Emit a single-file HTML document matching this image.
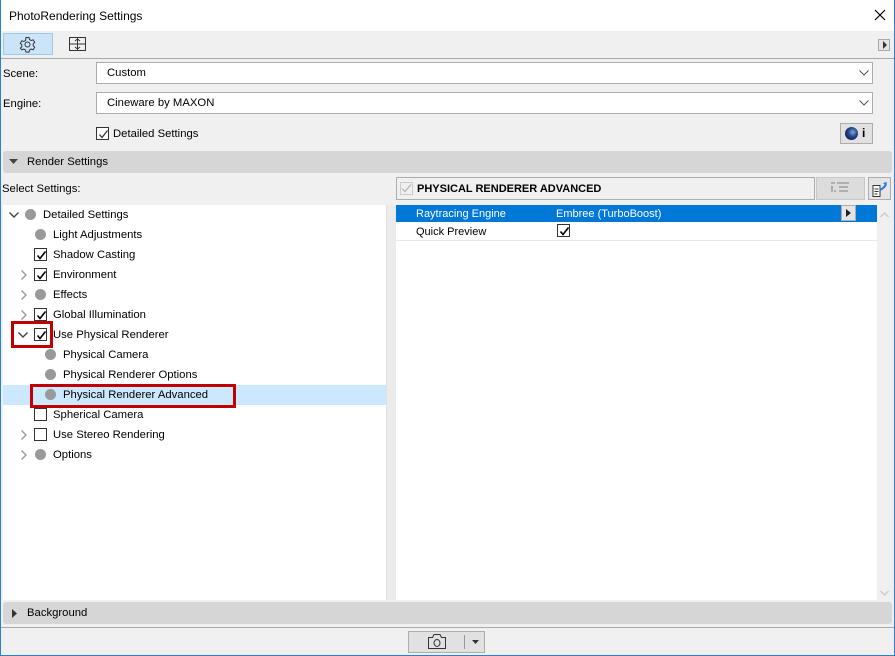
<!DOCTYPE html>
<html><head><meta charset="utf-8"><style>
*{margin:0;padding:0;box-sizing:border-box}
body{width:895px;height:656px;overflow:hidden;background:#f0f0f0;font-family:"Liberation Sans",sans-serif;font-size:11.3px;color:#000;position:relative}
.a{position:absolute}
.t{position:absolute;white-space:nowrap;line-height:14px}
.cb{position:absolute;width:13px;height:13px;border:1px solid #333;background:#fff}
.cb svg{position:absolute;left:1px;top:1px}
.dot{position:absolute;width:11px;height:11px;border-radius:50%;background:#999}
.chev{position:absolute;width:12px;height:12px}
</style></head><body>
<div class="a" style="left:0;top:0;width:895px;height:656px;border:1px solid #2b7fd4;border-top:none"></div>
<div class="a" style="left:1px;top:0;width:893px;height:31px;background:#fff"></div>
<div class="t" style="left:9px;top:9px;font-size:12px">PhotoRendering Settings</div>
<svg class="a" style="left:874px;top:9px" width="12" height="12"><path d="M1 1L11 11M11 1L1 11" stroke="#000" stroke-width="1.2"/></svg>
<div class="a" style="left:3px;top:33px;width:50px;height:22px;background:#cce4f7;border:1px solid #99c9ef"></div>
<svg class="a" style="left:19px;top:36px" width="17" height="17" viewBox="0 0 17 17"><circle cx="8.5" cy="8.5" r="2.5" fill="none" stroke="#333"/><path d="M7 1.5h3l.5 2 1.7 1 2-.7 1.5 2.6-1.5 1.4v2l1.5 1.4-1.5 2.6-2-.7-1.7 1-.5 2h-3l-.5-2-1.7-1-2 .7L1.3 12.2l1.5-1.4v-2L1.3 7.4l1.5-2.6 2 .7 1.7-1z" fill="none" stroke="#333"/></svg>
<svg class="a" style="left:69px;top:37px" width="18" height="15"><rect x="0.5" y="0.5" width="16" height="13" fill="none" stroke="#333"/><path d="M8.5 1v12M1 7h15" stroke="#333"/><path d="M6 4l2.5-2 2.5 2M6 10l2.5 2 2.5-2" fill="none" stroke="#333"/></svg>
<div class="a" style="left:878px;top:39px;width:12px;height:12px;border:1px solid #aaa;background:#e5e5e5"></div>
<svg class="a" style="left:882px;top:41px" width="6" height="8"><path d="M1 0L5 4L1 8z" fill="#333"/></svg>
<div class="a" style="left:1px;top:58px;width:893px;height:1px;background:#aaa"></div>
<div class="t" style="left:3px;top:67px">Scene:</div>
<div class="a" style="left:96px;top:62px;width:777px;height:22px;background:#fff;border:1px solid #adadad"></div>
<div class="t" style="left:107px;top:66px">Custom</div>
<svg class="a" style="left:859px;top:70px" width="10" height="6"><path d="M0.5 0.5L5 5L9.5 0.5" fill="none" stroke="#555"/></svg>
<div class="t" style="left:3px;top:97px">Engine:</div>
<div class="a" style="left:96px;top:92px;width:777px;height:22px;background:#fff;border:1px solid #adadad"></div>
<div class="t" style="left:107px;top:96px">Cineware by MAXON</div>
<svg class="a" style="left:859px;top:100px" width="10" height="6"><path d="M0.5 0.5L5 5L9.5 0.5" fill="none" stroke="#555"/></svg>
<div class="cb" style="left:96px;top:127px"><svg width="11" height="11"><path d="M1.5 5.5L4 8.5L9.5 1.5" fill="none" stroke="#333" stroke-width="1.3"/></svg></div>
<div class="t" style="left:113px;top:127px">Detailed Settings</div>
<div class="a" style="left:840px;top:123px;width:33px;height:21px;border:1px solid #adadad;background:#e1e1e1"></div>
<div class="a" style="left:845px;top:127px;width:13px;height:13px;border-radius:50%;background:radial-gradient(circle at 60% 40%,#8ab 0,#23479a 40%,#0b1030 90%)"></div>
<div class="t" style="left:862px;top:126px;font-weight:bold;font-size:12px">i</div>
<div class="a" style="left:3px;top:151px;width:889px;height:22px;background:#d6d6d6;border-radius:3px"></div>
<svg class="a" style="left:9px;top:159px" width="9" height="5"><path d="M0 0H9L4.5 5z" fill="#444"/></svg>
<div class="t" style="left:27px;top:155px">Render Settings</div>
<div class="t" style="left:2px;top:182px">Select Settings:</div>
<div class="a" style="left:3px;top:205px;width:383px;height:395px;background:#fff"></div>
<div class="a" style="left:386px;top:205px;width:10px;height:395px;background:#ebebeb;border-left:1px solid #e0e0e0"></div>
<div class="a" style="left:3px;top:385px;width:383px;height:20px;background:#cce8ff"></div>
<svg class="chev" style="left:8px;top:209px"><path d="M1.5 3.5L6 8L10.5 3.5" fill="none" stroke="#444" stroke-width="1.4"/></svg>
<div class="dot" style="left:25px;top:209px"></div><div class="t" style="left:43px;top:208px">Detailed Settings</div>
<div class="dot" style="left:35px;top:229px"></div><div class="t" style="left:53px;top:228px">Light Adjustments</div>
<div class="cb" style="left:34px;top:248px"><svg width="11" height="11"><path d="M1.5 5.5L4 8.5L9.5 1.5" fill="none" stroke="#000" stroke-width="1.6"/></svg></div><div class="t" style="left:53px;top:248px">Shadow Casting</div>
<svg class="chev" style="left:18px;top:269px"><path d="M3.5 1.5L8 6L3.5 10.5" fill="none" stroke="#999" stroke-width="1.4"/></svg>
<div class="cb" style="left:34px;top:268px"><svg width="11" height="11"><path d="M1.5 5.5L4 8.5L9.5 1.5" fill="none" stroke="#000" stroke-width="1.6"/></svg></div><div class="t" style="left:53px;top:268px">Environment</div>
<svg class="chev" style="left:18px;top:289px"><path d="M3.5 1.5L8 6L3.5 10.5" fill="none" stroke="#999" stroke-width="1.4"/></svg>
<div class="dot" style="left:35px;top:289px"></div><div class="t" style="left:53px;top:288px">Effects</div>
<svg class="chev" style="left:18px;top:309px"><path d="M3.5 1.5L8 6L3.5 10.5" fill="none" stroke="#999" stroke-width="1.4"/></svg>
<div class="cb" style="left:34px;top:308px"><svg width="11" height="11"><path d="M1.5 5.5L4 8.5L9.5 1.5" fill="none" stroke="#000" stroke-width="1.6"/></svg></div><div class="t" style="left:53px;top:308px">Global Illumination</div>
<svg class="chev" style="left:17px;top:329px"><path d="M1.5 3.5L6 8L10.5 3.5" fill="none" stroke="#444" stroke-width="1.4"/></svg>
<div class="cb" style="left:34px;top:328px"><svg width="11" height="11"><path d="M1.5 5.5L4 8.5L9.5 1.5" fill="none" stroke="#000" stroke-width="1.6"/></svg></div><div class="t" style="left:53px;top:328px">Use Physical Renderer</div>
<div class="dot" style="left:45px;top:349px"></div><div class="t" style="left:63px;top:348px">Physical Camera</div>
<div class="dot" style="left:45px;top:369px"></div><div class="t" style="left:63px;top:368px">Physical Renderer Options</div>
<div class="dot" style="left:45px;top:389px"></div><div class="t" style="left:63px;top:388px">Physical Renderer Advanced</div>
<div class="cb" style="left:34px;top:408px"></div><div class="t" style="left:53px;top:408px">Spherical Camera</div>
<svg class="chev" style="left:18px;top:429px"><path d="M3.5 1.5L8 6L3.5 10.5" fill="none" stroke="#999" stroke-width="1.4"/></svg>
<div class="cb" style="left:34px;top:428px"></div><div class="t" style="left:53px;top:428px">Use Stereo Rendering</div>
<svg class="chev" style="left:18px;top:449px"><path d="M3.5 1.5L8 6L3.5 10.5" fill="none" stroke="#999" stroke-width="1.4"/></svg>
<div class="dot" style="left:35px;top:449px"></div><div class="t" style="left:53px;top:448px">Options</div>
<div class="a" style="left:11px;top:321px;width:42px;height:27px;border:3px solid #c00000"></div>
<div class="a" style="left:30px;top:384px;width:206px;height:24px;border:3px solid #c00000"></div>
<div class="a" style="left:396px;top:177px;width:419px;height:23px;border:1px solid #adadad;background:#f0f0f0"></div>
<svg class="a" style="left:400px;top:182px" width="13" height="13"><rect x="0.5" y="0.5" width="12" height="12" fill="none" stroke="#ccc"/><path d="M2 6.5L5 9.5L11 2.5" fill="none" stroke="#bbb" stroke-width="1.4"/></svg>
<div class="t" style="left:417px;top:182px;font-weight:bold;font-size:11px">PHYSICAL RENDERER ADVANCED</div>
<div class="a" style="left:816px;top:177px;width:49px;height:23px;border:1px solid #c8c8c8;background:#dcdcdc"></div>
<svg class="a" style="left:831px;top:182px" width="18" height="13"><path d="M0 1h4M0 5h2M3 9h2M6 1h12M8 5h9M8 9h9M1 4v6" stroke="#a0a0a0" stroke-width="1.5"/></svg>
<div class="a" style="left:868px;top:177px;width:23px;height:23px;border:1px solid #adadad;background:#e5e5e5"></div>
<svg class="a" style="left:871px;top:180px" width="18" height="18"><path d="M2 5.5h7v11H2z" fill="#fff" stroke="#333"/><path d="M3.5 9h4M3.5 11.5h4M3.5 14h3" stroke="#333"/><path d="M9 10c2-1 5-3 6-6" fill="none" stroke="#2a7ae2" stroke-width="2"/><path d="M12 3l4-1-1 4z" fill="#2a7ae2"/></svg>
<div class="a" style="left:396px;top:205px;width:481px;height:395px;background:#fff"></div>
<div class="a" style="left:877px;top:205px;width:15px;height:395px;background:#f0f0f0"></div>
<svg class="a" style="left:880px;top:212px" width="9" height="6"><path d="M0.5 5L4.5 1L8.5 5" fill="none" stroke="#c0c0c0"/></svg>
<svg class="a" style="left:880px;top:590px" width="9" height="6"><path d="M0.5 1L4.5 5L8.5 1" fill="none" stroke="#c0c0c0"/></svg>
<div class="a" style="left:396px;top:205px;width:481px;height:17px;background:#0078d7"></div>
<div class="t" style="left:416px;top:207px;color:#fff;font-size:11px">Raytracing Engine</div>
<div class="t" style="left:556px;top:207px;color:#fff;font-size:11px">Embree (TurboBoost)</div>
<div class="a" style="left:841px;top:205px;width:15px;height:16px;border:1px solid #adadad;background:#e5e5e5"></div>
<svg class="a" style="left:846px;top:209px" width="5" height="8"><path d="M0 0L5 4L0 8z" fill="#222"/></svg>
<div class="t" style="left:416px;top:225px;font-size:11px">Quick Preview</div>
<div class="cb" style="left:557px;top:224px"><svg width="11" height="11"><path d="M1.5 5.5L4 8.5L9.5 1.5" fill="none" stroke="#000" stroke-width="1.6"/></svg></div>
<div class="a" style="left:396px;top:240px;width:481px;height:1px;background:#e8e8e8"></div>
<div class="a" style="left:3px;top:602px;width:889px;height:22px;background:#d6d6d6;border-radius:3px"></div>
<svg class="a" style="left:12px;top:609px" width="5" height="9"><path d="M0 0L5 4.5L0 9z" fill="#333"/></svg>
<div class="t" style="left:27px;top:606px">Background</div>
<div class="a" style="left:1px;top:627px;width:893px;height:1px;background:#aaa"></div>
<div class="a" style="left:408px;top:631px;width:77px;height:22px;border:1px solid #adadad;background:#e1e1e1"></div>
<svg class="a" style="left:427px;top:633px" width="20" height="17"><path d="M1.5 4.5h4l1.5-3h6l1.5 3h4v11h-17z" fill="none" stroke="#333"/><ellipse cx="10" cy="10" rx="3" ry="3.5" fill="none" stroke="#333"/></svg>
<div class="a" style="left:464px;top:635px;width:1px;height:14px;background:#999"></div>
<svg class="a" style="left:472px;top:640px" width="7" height="4"><path d="M0 0H7L3.5 4z" fill="#333"/></svg>
</body></html>
